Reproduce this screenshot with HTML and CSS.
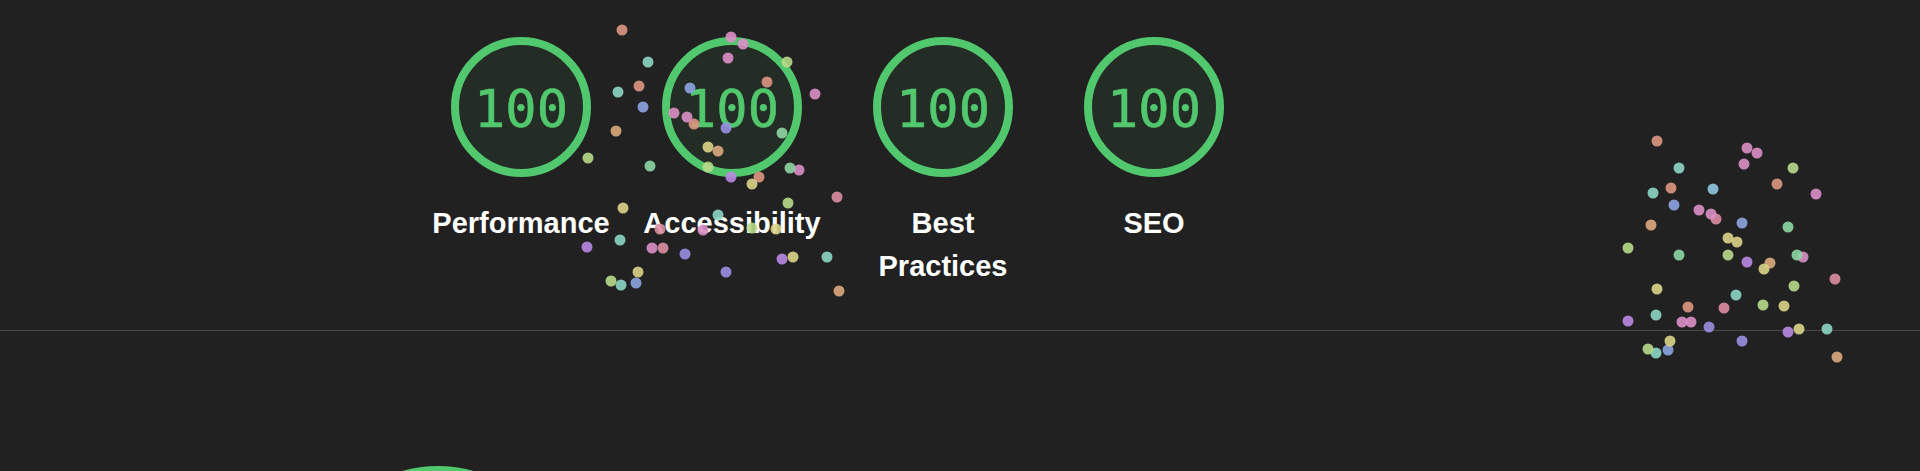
FILE: index.html
```html
<!DOCTYPE html>
<html lang="en">
<head>
    <meta charset="UTF-8">
    <meta name="viewport" content="width=device-width, initial-scale=1.0">
    <title>Lighthouse Report</title>
    <link rel="stylesheet" href="styles.css">
</head>
<body>
    <div class="report">
        <!-- Top score summary -->
        <header class="scores">
            <div class="gauge">
                <div class="gauge-ring">
                    <svg viewBox="0 0 140 140"><circle cx="70" cy="70" r="66"/></svg>
                    <span class="gauge-value">100</span>
                </div>
                <div class="gauge-label">Performance</div>
            </div>
            <div class="gauge">
                <div class="gauge-ring">
                    <svg viewBox="0 0 140 140"><circle cx="70" cy="70" r="66"/></svg>
                    <span class="gauge-value">100</span>
                </div>
                <div class="gauge-label">Accessibility</div>
            </div>
            <div class="gauge">
                <div class="gauge-ring">
                    <svg viewBox="0 0 140 140"><circle cx="70" cy="70" r="66"/></svg>
                    <span class="gauge-value">100</span>
                </div>
                <div class="gauge-label">Best Practices</div>
            </div>
            <div class="gauge">
                <div class="gauge-ring">
                    <svg viewBox="0 0 140 140"><circle cx="70" cy="70" r="66"/></svg>
                    <span class="gauge-value">100</span>
                </div>
                <div class="gauge-label">SEO</div>
            </div>
        </header>

        <!-- Performance category (cut off below) -->
        <section class="category">
            <svg class="big-gauge" viewBox="0 0 260 260"><circle cx="130" cy="130" r="126"/></svg>
        </section>

        <!-- Confetti -->
        <svg class="confetti" viewBox="0 0 1920 471">
            <g class="c-peach">
                <circle cx="622" cy="30" r="5.5"/><circle cx="639" cy="86" r="5.5"/><circle cx="767" cy="82" r="5.5"/>
                <circle cx="759" cy="177" r="5.5"/><circle cx="694" cy="124" r="5.5"/>
                <circle cx="1657" cy="141" r="5.5"/><circle cx="1671" cy="188" r="5.5"/><circle cx="1777" cy="184" r="5.5"/>
                <circle cx="1688" cy="307" r="5.5"/>
            </g>
            <g class="c-orange">
                <circle cx="616" cy="131" r="5.5"/><circle cx="718" cy="151" r="5.5"/><circle cx="839" cy="291" r="5.5"/>
                <circle cx="1651" cy="225" r="5.5"/><circle cx="1770" cy="263" r="5.5"/><circle cx="1837" cy="357" r="5.5"/>
            </g>
            <g class="c-rose">
                <circle cx="837" cy="197" r="5.5"/><circle cx="663" cy="248" r="5.5"/><circle cx="660" cy="229" r="5.5"/>
                <circle cx="1716" cy="219" r="5.5"/><circle cx="1835" cy="279" r="5.5"/><circle cx="1724" cy="308" r="5.5"/>
            </g>
            <g class="c-pink">
                <circle cx="674" cy="113" r="5.5"/><circle cx="687" cy="117" r="5.5"/><circle cx="731" cy="37" r="5.5"/>
                <circle cx="743" cy="44" r="5.5"/><circle cx="728" cy="58" r="5.5"/><circle cx="815" cy="94" r="5.5"/>
                <circle cx="799" cy="170" r="5.5"/><circle cx="652" cy="248" r="5.5"/><circle cx="703" cy="230" r="5.5"/>
                <circle cx="1699" cy="210" r="5.5"/><circle cx="1711" cy="214" r="5.5"/><circle cx="1747" cy="148" r="5.5"/>
                <circle cx="1757" cy="153" r="5.5"/><circle cx="1744" cy="164" r="5.5"/><circle cx="1816" cy="194" r="5.5"/>
                <circle cx="1803" cy="257" r="5.5"/><circle cx="1682" cy="322" r="5.5"/><circle cx="1691" cy="322" r="5.5"/>
            </g>
            <g class="c-purple">
                <circle cx="731" cy="177" r="5.5"/><circle cx="587" cy="247" r="5.5"/><circle cx="782" cy="259" r="5.5"/>
                <circle cx="1747" cy="262" r="5.5"/><circle cx="1628" cy="321" r="5.5"/><circle cx="1788" cy="332" r="5.5"/>
            </g>
            <g class="c-violet">
                <circle cx="685" cy="254" r="5.5"/><circle cx="726" cy="272" r="5.5"/><circle cx="726" cy="128" r="5.5"/>
                <circle cx="1709" cy="327" r="5.5"/><circle cx="1742" cy="341" r="5.5"/>
            </g>
            <g class="c-blue">
                <circle cx="643" cy="107" r="5.5"/><circle cx="690" cy="88" r="5.5"/><circle cx="636" cy="283" r="5.5"/>
                <circle cx="1674" cy="205" r="5.5"/><circle cx="1742" cy="223" r="5.5"/><circle cx="1668" cy="350" r="5.5"/>
            </g>
            <g class="c-sky">
                <circle cx="1713" cy="189" r="5.5"/>
            </g>
            <g class="c-teal">
                <circle cx="648" cy="62" r="5.5"/><circle cx="618" cy="92" r="5.5"/><circle cx="620" cy="240" r="5.5"/>
                <circle cx="718" cy="215" r="5.5"/><circle cx="827" cy="257" r="5.5"/><circle cx="621" cy="285" r="5.5"/>
                <circle cx="1679" cy="168" r="5.5"/><circle cx="1653" cy="193" r="5.5"/><circle cx="1736" cy="295" r="5.5"/>
                <circle cx="1656" cy="315" r="5.5"/><circle cx="1827" cy="329" r="5.5"/><circle cx="1656" cy="353" r="5.5"/>
            </g>
            <g class="c-green">
                <circle cx="650" cy="166" r="5.5"/><circle cx="782" cy="133" r="5.5"/><circle cx="790" cy="168" r="5.5"/>
                <circle cx="1788" cy="227" r="5.5"/><circle cx="1679" cy="255" r="5.5"/><circle cx="1797" cy="255" r="5.5"/>
            </g>
            <g class="c-lime">
                <circle cx="588" cy="158" r="5.5"/><circle cx="787" cy="62" r="5.5"/><circle cx="708" cy="167" r="5.5"/>
                <circle cx="788" cy="203" r="5.5"/><circle cx="752" cy="228" r="5.5"/><circle cx="611" cy="281" r="5.5"/>
                <circle cx="1793" cy="168" r="5.5"/><circle cx="1628" cy="248" r="5.5"/><circle cx="1728" cy="255" r="5.5"/>
                <circle cx="1794" cy="286" r="5.5"/><circle cx="1763" cy="305" r="5.5"/><circle cx="1648" cy="349" r="5.5"/>
            </g>
            <g class="c-yellow">
                <circle cx="708" cy="147" r="5.5"/><circle cx="752" cy="184" r="5.5"/><circle cx="623" cy="208" r="5.5"/>
                <circle cx="776" cy="229" r="5.5"/><circle cx="793" cy="257" r="5.5"/><circle cx="638" cy="272" r="5.5"/>
                <circle cx="1728" cy="238" r="5.5"/><circle cx="1737" cy="242" r="5.5"/><circle cx="1764" cy="269" r="5.5"/>
                <circle cx="1657" cy="289" r="5.5"/><circle cx="1784" cy="306" r="5.5"/><circle cx="1799" cy="329" r="5.5"/>
                <circle cx="1670" cy="341" r="5.5"/>
            </g>
        </svg>
    </div>
</body>
</html>
```

FILE: styles.css
```css
body {
    margin: 0;
    background-color: #212121;
    font-family: "Liberation Sans", Arial, sans-serif;
    color: #fff;
    overflow: hidden;
}

.report {
    position: relative;
    width: 1920px;
    height: 471px;
    overflow: hidden;
}

/* score summary */
.scores {
    display: flex;
    gap: 21px;
    height: 293px;
    padding: 37px 0 0 426px;
    border-bottom: 1px solid #4a4a4a;
}

.gauge {
    width: 190px;
    display: flex;
    flex-direction: column;
    align-items: center;
}

.gauge-ring {
    position: relative;
    width: 140px;
    height: 140px;
}

.gauge-ring svg {
    display: block;
    width: 140px;
    height: 140px;
}

.gauge-ring circle {
    fill: rgba(82, 200, 110, 0.07);
    stroke: #52c86e;
    stroke-width: 8;
}

.gauge-value {
    position: absolute;
    inset: 0;
    display: flex;
    align-items: center;
    justify-content: center;
    padding-top: 3px;
    font-family: "DejaVu Sans Mono", "Liberation Mono", monospace;
    font-size: 52px;
    color: #52c86e;
    -webkit-text-stroke: 0.6px #52c86e;
}

.gauge-label {
    margin-top: 25px;
    font-size: 29px;
    font-weight: 700;
    line-height: 43px;
    text-align: center;
}

/* category section */
.category {
    padding: 135px 0 0 308px;
}

.big-gauge {
    display: block;
    width: 260px;
    height: 260px;
}

.big-gauge circle {
    fill: none;
    stroke: #52c86e;
    stroke-width: 8;
}

/* confetti overlay */
.confetti {
    position: absolute;
    top: 0;
    left: 0;
    width: 1920px;
    height: 471px;
    pointer-events: none;
}

.confetti circle { opacity: 0.9; }
.c-peach { fill: #dc9682; }
.c-orange { fill: #dcaa7e; }
.c-rose { fill: #dc8ea2; }
.c-pink { fill: #dc8fc6; }
.c-purple { fill: #b98ae2; }
.c-violet { fill: #9a8ee2; }
.c-blue { fill: #8ea4e2; }
.c-sky { fill: #8fc8e0; }
.c-teal { fill: #8cd6c4; }
.c-green { fill: #8ed6a4; }
.c-lime { fill: #b8da8a; }
.c-yellow { fill: #dcd48a; }
```
